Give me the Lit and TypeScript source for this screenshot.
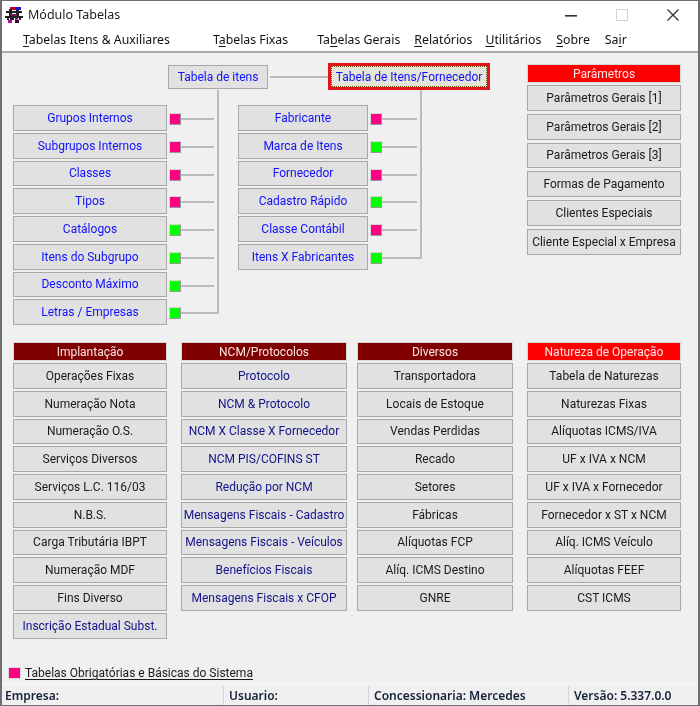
import { LitElement, html, css } from "lit";
import { customElement } from "lit/decorators.js";

type Row = [string, "p" | "g"];
const left: Row[] = [["Grupos Internos","p"],["Subgrupos Internos","p"],["Classes","p"],["Tipos","p"],["Catálogos","g"],["Itens do Subgrupo","g"],["Desconto Máximo","g"],["Letras / Empresas","g"]];
const right: Row[] = [["Fabricante","p"],["Marca de Itens","g"],["Fornecedor","p"],["Cadastro Rápido","g"],["Classe Contábil","p"],["Itens X Fabricantes","g"]];
const params = ["Parâmetros Gerais [1]","Parâmetros Gerais [2]","Parâmetros Gerais [3]","Formas de Pagamento","Clientes Especiais","Cliente Especial x Empresa"];
const cols: { title: string; red?: boolean; navy?: boolean; items: string[] }[] = [
  { title: "Implantação", items: ["Operações Fixas","Numeração Nota","Numeração O.S.","Serviços Diversos","Serviços L.C. 116/03","N.B.S.","Carga Tributária IBPT","Numeração MDF","Fins Diverso","Inscrição Estadual Subst."] },
  { title: "NCM/Protocolos", navy: true, items: ["Protocolo","NCM & Protocolo","NCM X Classe X Fornecedor","NCM PIS/COFINS ST","Redução por NCM","Mensagens Fiscais - Cadastro","Mensagens Fiscais - Veículos","Benefícios Fiscais","Mensagens Fiscais x CFOP"] },
  { title: "Diversos", items: ["Transportadora","Locais de Estoque","Vendas Perdidas","Recado","Setores","Fábricas","Alíquotas FCP","Alíq. ICMS Destino","GNRE"] },
  { title: "Natureza de Operação", red: true, items: ["Tabela de Naturezas","Naturezas Fixas","Alíquotas ICMS/IVA","UF x IVA x NCM","UF x IVA x Fornecedor","Fornecedor x ST x NCM","Alíq. ICMS Veículo","Alíquotas FEEF","CST ICMS"] },
];

@customElement("app-root")
export class AppRoot extends LitElement {
  static styles = css`
    :host { display: block; width: 700px; height: 706px; font-family: Roboto, "Liberation Sans", sans-serif; font-size: 12px; color: #1a1a1a; }
    * { box-sizing: border-box; }
    .win { width: 700px; height: 706px; display: flex; flex-direction: column; background: #fff; border: 1px solid #6e6e6e; border-width: 1px 2px 1px 2px; overflow: hidden; filter: blur(0.35px); }
    .title { height: 27px; display: flex; align-items: center; padding-left: 2px; flex: none; font-family: "Noto Sans", sans-serif; }
    .title svg.logo { width: 20px; height: 18px; margin-right: 4px; }
    .title .name { font-size: 12.5px; color: #222; flex: 1; }
    .ctl { display: flex; align-items: center; }
    .ctl svg { display: block; width: 14px; height: 14px; }
    .ctl .min { margin-right: 37px; }
    .ctl .max { margin-right: 37px; }
    .ctl .cls { margin-right: 18px; }
    .menu { height: 23px; display: flex; align-items: center; padding-left: 21px; flex: none; color: #111; font-family: "Noto Sans", sans-serif; font-size: 12.3px; }
    .menu span { margin-right: 15px; white-space: nowrap; }
    .menu span:nth-child(1) { margin-right: 43px; }
    .menu span:nth-child(2) { margin-right: 29px; }
    .menu span:nth-child(3) { margin-right: 14px; }
    .menu span:nth-child(4) { margin-right: 13px; }
    .menu u { text-underline-offset: 2px; }
    .main { flex: 1; min-height: 0; background: #f0f0f0; border-top: 2px solid #a9a9a9; padding: 10px 0 0 11px; display: flex; flex-direction: column; }
    .upper { height: 279px; display: flex; flex: none; }
    .diagram { width: 514px; flex: none; }
    .roots { height: 27px; display: flex; align-items: center; padding-left: 155px; }
    .btn { display: flex; align-items: center; justify-content: center; background: #e1e1e1; border: 1px solid #a8a8a8; height: 25.75px; color: #1a1a1a; white-space: nowrap; width: 100%; flex: none; }
    .blue { color: #1010ff; }
    .navy { color: #12128a; }
    .roots .r1 { width: 100px; height: 24px; }
    .roots .line { width: 58px; height: 2px; margin: 1px 0 0 2px; background: #bcbcbc; flex: none; }
    .roots .r2 { width: 162px; height: 27px; border: 3px solid #e0141a; flex: none; background: #e1e1e1; }
    .roots .r2 span { flex: 1; height: 100%; display: flex; align-items: center; justify-content: center; border: 1px dotted #5c5c10; background: #e4e4d8; }
    .trees { display: flex; gap: 19px; }
    .tree { display: flex; flex-direction: column; }
    .tree.a { width: 206px; }
    .tree.b { width: 184px; }
    .drop { height: 15px; align-self: flex-end; width: 2px; background: #bcbcbc; }
    .row { display: flex; height: 27.75px; }
    .tree.a .btn { width: 154px; }
    .tree.b .btn { width: 130px; }
    .sw { width: 12px; height: 12px; margin: 8px 0 0 2px; flex: none; border: 1px solid #d8d8d8; border-right-color: #9a9a9a; border-bottom-color: #9a9a9a; }
    .sw.p { background: #ff0080; }
    .sw.g { background: #00ff00; }
    .link { flex: 1; display: flex; align-self: stretch; }
    .h { flex: 1; height: 2px; margin: 13px 3px 0 0; background: #bcbcbc; }
    .v { width: 2px; background: #bcbcbc; }
    .row.last .h { margin-right: 0; }
    .row.last .v { height: 15px; }
    .side { width: 154px; flex: none; padding-top: 1px; display: flex; flex-direction: column; gap: 3px; }
    .head { height: 19px; display: flex; align-items: center; justify-content: center; color: #fbe6e6; border: 1px solid #d8d8d8; white-space: nowrap; flex: none; }
    .head.red { background: #ff0000; }
    .head.dark { background: #800000; }
    .side .head { margin-bottom: -1px; }
    .lower { display: flex; align-items: flex-start; }
    .col { display: flex; flex-direction: column; gap: 2px; flex: none; }
    .col:nth-child(1) { width: 154px; }
    .col:nth-child(2) { width: 166px; margin-left: 14px; }
    .col:nth-child(3) { width: 156px; margin-left: 10px; }
    .col:nth-child(4) { width: 154px; margin-left: 14px; }
    .legend { margin: auto 0 0 -5px; height: 14px; display: flex; align-items: center; color: #1a1a1a; }
    .legend i { width: 13px; height: 12px; background: #ff0080; border: 1px solid #d8d8d8; margin-right: 4px; }
    .legend span { text-decoration: underline; text-underline-offset: 2px; }
    .status { height: 22px; margin: 3px 0 0 -11px; flex: none; display: flex; background: #f0f0f0; border-top: 1px solid #fafafa; padding-top: 2px; font-family: "Noto Sans", sans-serif; font-weight: 600; color: #16203a; font-size: 12px; }
    .status div { display: flex; align-items: center; padding-left: 3px; border-right: 1px solid #d4d4d4; white-space: nowrap; }
    .status .s1 { width: 222px; }
    .status .s2 { width: 145px; padding-left: 5px; }
    .status .s3 { width: 200px; padding-left: 5px; }
    .status .s4 { flex: 1; border: 0; padding-left: 5px; }
  `;

  private rows(list: Row[]) {
    return list.map((r, i) => html`
      <div class="row ${i === list.length - 1 ? "last" : ""}">
        <div class="btn blue">${r[0]}</div>
        <div class="sw ${r[1]}"></div>
        <div class="link"><i class="h"></i><i class="v"></i></div>
      </div>`);
  }

  render() {
    return html`
      <div class="win">
        <div class="title">
          <svg class="logo" viewBox="0 0 20 18">
            <rect x="6" y="1" width="5" height="3" fill="#c00018"/><rect x="11" y="1" width="6" height="3" fill="#1818c8"/>
            <rect x="2" y="5" width="16" height="2" fill="#202020"/>
            <rect x="5" y="3" width="3" height="8" fill="#202020"/><rect x="12" y="4" width="3" height="7" fill="#202020"/>
            <rect x="7" y="8" width="6" height="3" fill="#702050"/>
            <rect x="1" y="10" width="18" height="2" fill="#202020"/>
            <rect x="3" y="12" width="2" height="2" fill="#202020"/><rect x="15" y="12" width="2" height="2" fill="#202020"/>
            <rect x="6" y="12" width="4" height="2" fill="#301030"/><rect x="11" y="12" width="3" height="2" fill="#b010a0"/>
            <rect x="4" y="14" width="4" height="3" fill="#b010a0"/><rect x="11" y="14" width="4" height="3" fill="#301030"/>
          </svg>
          <span class="name">Módulo Tabelas</span>
          <div class="ctl">
            <svg class="min" viewBox="0 0 14 14"><rect x="1" y="7" width="12" height="1.6" fill="#333"/></svg>
            <svg class="max" viewBox="0 0 14 14"><rect x="1.5" y="1.5" width="11" height="11" fill="none" stroke="#d4d4d4"/></svg>
            <svg class="cls" viewBox="0 0 14 14"><path d="M1.5 1.5 12.5 12.5M12.5 1.5 1.5 12.5" stroke="#333" stroke-width="1.3" fill="none"/></svg>
          </div>
        </div>
        <div class="menu">
          <span><u>T</u>abelas Itens &amp; Auxiliares</span>
          <span>T<u>a</u>belas Fixas</span>
          <span>Ta<u>b</u>elas Gerais</span>
          <span><u>R</u>elatórios</span>
          <span><u>U</u>tilitários</span>
          <span><u>S</u>obre</span>
          <span>Sa<u>i</u>r</span>
        </div>
        <div class="main">
          <div class="upper">
            <div class="diagram">
              <div class="roots">
                <div class="btn blue r1">Tabela de itens</div>
                <div class="line"></div>
                <div class="btn blue r2"><span>Tabela de Itens/Fornecedor</span></div>
              </div>
              <div class="trees">
                <div class="tree a"><div class="drop"></div>${this.rows(left)}</div>
                <div class="tree b"><div class="drop"></div>${this.rows(right)}</div>
              </div>
            </div>
            <div class="side">
              <div class="head red">Parâmetros</div>
              ${params.map((p) => html`<div class="btn">${p}</div>`)}
            </div>
          </div>
          <div class="lower">
            ${cols.map((c) => html`
              <div class="col">
                <div class="head ${c.red ? "red" : "dark"}">${c.title}</div>
                ${c.items.map((t) => html`<div class="btn ${c.navy || t.startsWith("Inscri") ? "navy" : ""}">${t}</div>`)}
              </div>`)}
          </div>
          <div class="legend"><i></i><span>Tabelas Obrigatórias e Básicas do Sistema</span></div>
          <div class="status">
            <div class="s1">Empresa:</div>
            <div class="s2">Usuario:</div>
            <div class="s3">Concessionaria: Mercedes</div>
            <div class="s4">Versão: 5.337.0.0</div>
          </div>
        </div>
      </div>`;
  }
}
